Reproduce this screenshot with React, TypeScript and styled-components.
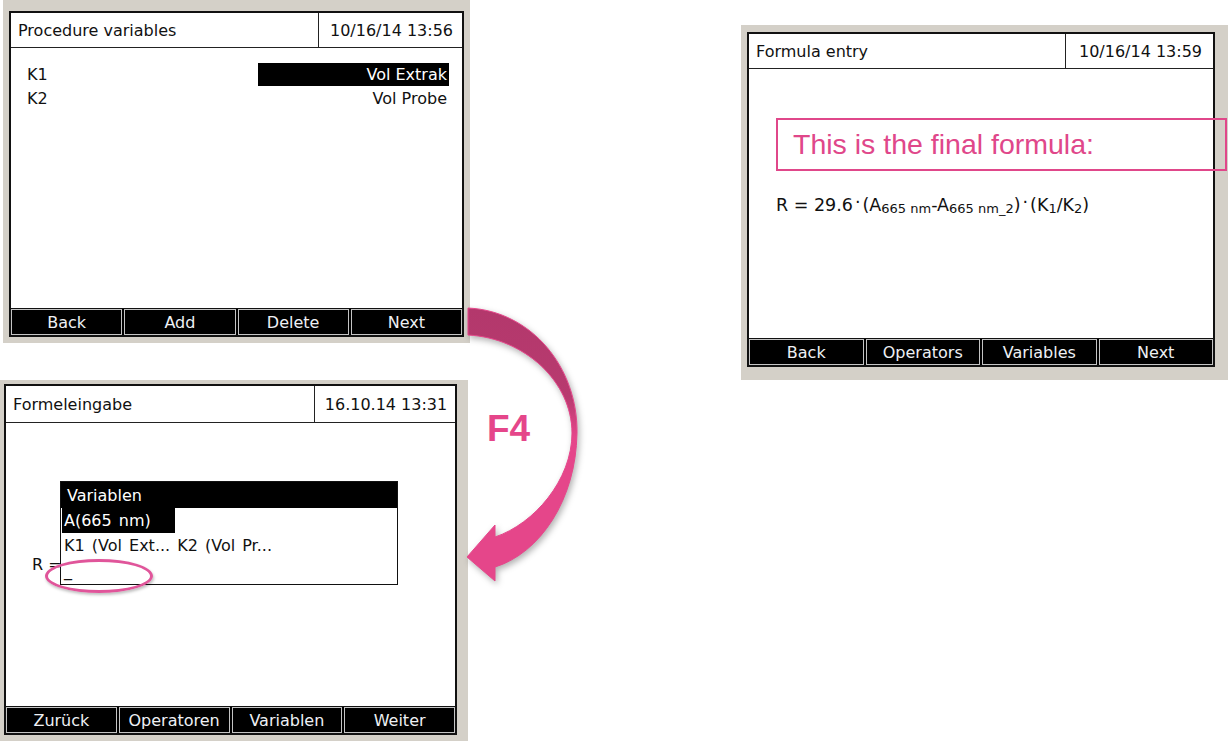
import styled, { createGlobalStyle } from "styled-components";

const GlobalStyle = createGlobalStyle`
  html, body {
    margin: 0;
    padding: 0;
    background: #ffffff;
  }
  body {
    font-family: "DejaVu Sans", Verdana, sans-serif;
  }
`;

const Canvas = styled.div`
  position: relative;
  width: 1228px;
  height: 741px;
  overflow: hidden;
  background: #ffffff;
`;

// each device screenshot sits at its own place on the slide
const Frame = styled.div<{ $x: number; $y: number; $w: number; $h: number; $pad: string }>`
  position: absolute;
  left: ${(p) => p.$x}px;
  top: ${(p) => p.$y}px;
  width: ${(p) => p.$w}px;
  height: ${(p) => p.$h}px;
  box-sizing: border-box;
  padding: ${(p) => p.$pad};
  background: #d4d0c8;
  display: flex;
`;

const Panel = styled.div`
  flex: 1;
  display: flex;
  flex-direction: column;
  border: 2px solid #111;
  background: #fff;
  color: #111;
  font-size: 16px;
`;

const Header = styled.div<{ $h: number }>`
  display: flex;
  height: ${(p) => p.$h}px;
  border-bottom: 1.5px solid #222;
  flex-shrink: 0;
`;

const Title = styled.div`
  flex: 1;
  display: flex;
  align-items: center;
  padding-left: 7px;
`;

const DateCell = styled.div<{ $w: number }>`
  width: ${(p) => p.$w}px;
  border-left: 1.5px solid #222;
  display: flex;
  align-items: center;
  justify-content: center;
  padding-left: 2px;
`;

const Body = styled.div<{ $pad: string }>`
  position: relative;
  flex: 1;
  padding: ${(p) => p.$pad};
  border-bottom: 1.5px solid #111;
`;

const Footer = styled.div`
  display: grid;
  grid-template-columns: repeat(4, 1fr);
  gap: 2px;
  height: 26px;
  background: #000;
`;

const SoftKey = styled.div`
  border: 1px solid #c4c4c4;
  background: #000;
  color: #eef0f4;
  display: flex;
  align-items: center;
  justify-content: center;
  font-size: 16px;
`;

const VarRow = styled.div`
  display: flex;
  justify-content: space-between;
  align-items: center;
  height: 24px;
`;

const Value = styled.span<{ $selected?: boolean }>`
  width: 191px;
  height: 23px;
  line-height: 23px;
  text-align: right;
  padding-right: 2px;
  box-sizing: border-box;
  background: ${(p) => (p.$selected ? "#000" : "transparent")};
  color: ${(p) => (p.$selected ? "#fff" : "#111")};
`;

const Popup = styled.div`
  position: absolute;
  left: 54px;
  top: 58px;
  width: 338px;
  height: 104px;
  box-sizing: border-box;
  border: 1.5px solid #111;
  background: #fff;
  display: flex;
  flex-direction: column;
`;

const PopupTitle = styled.div`
  height: 26px;
  background: #000;
  color: #fff;
  display: flex;
  align-items: center;
  padding-left: 6px;
`;

const PopupItem = styled.div<{ $selected?: boolean }>`
  align-self: flex-start;
  margin-left: 1px;
  height: 25px;
  line-height: 25px;
  padding: 0 ${(p) => (p.$selected ? "24px" : "2px")} 0 2px;
  background: ${(p) => (p.$selected ? "#000" : "transparent")};
  color: ${(p) => (p.$selected ? "#fff" : "#111")};
  word-spacing: 2px;
`;

const Equation = styled.div`
  position: absolute;
  left: 26px;
  top: 132px;
`;

const Formula = styled.div`
  font-size: 17.5px;
  white-space: nowrap;
  sub {
    font-size: 13px;
    vertical-align: -2px;
    line-height: 0;
  }
  .dot {
    display: inline-block;
    transform: translateY(-3px);
    margin: 0 2px;
  }
`;

const Callout = styled.div`
  position: absolute;
  left: 776px;
  top: 118px;
  width: 451px;
  height: 53px;
  box-sizing: border-box;
  border: 2px solid #e0478a;
  color: #e0478a;
  font-family: "Liberation Sans", Arial, sans-serif;
  font-size: 28.5px;
  padding-left: 15px;
  display: flex;
  align-items: center;
`;

const Ring = styled.div`
  position: absolute;
  left: 45px;
  top: 559px;
  width: 108px;
  height: 34px;
  box-sizing: border-box;
  border: 3px solid #e0559a;
  border-radius: 50%;
  box-shadow: 1px 2px 3px rgba(0, 0, 0, 0.25);
`;

const KeyLabel = styled.div`
  position: absolute;
  left: 487px;
  top: 408px;
  color: #e5468a;
  font-family: "Liberation Sans", Arial, sans-serif;
  font-weight: bold;
  font-size: 37px;
`;

const ArrowSvg = styled.svg`
  position: absolute;
  left: 440px;
  top: 290px;
  overflow: visible;
  filter: drop-shadow(2px 3px 3px rgba(0, 0, 0, 0.3));
`;

function SoftKeys({ labels }: { labels: string[] }) {
  return (
    <Footer>
      {labels.map((l) => (
        <SoftKey key={l}>{l}</SoftKey>
      ))}
    </Footer>
  );
}

function CurvedArrow() {
  return (
    <ArrowSvg width="160" height="310" viewBox="440 290 160 310">
      <defs>
        <linearGradient id="arrowFill" x1="0" y1="308" x2="0" y2="470" gradientUnits="userSpaceOnUse">
          <stop offset="0" stopColor="#b3386c" />
          <stop offset="0.55" stopColor="#b83a6f" />
          <stop offset="0.8" stopColor="#e5468a" />
          <stop offset="1" stopColor="#e5468a" />
        </linearGradient>
      </defs>
      <path
        d="M468 308 C532 311 578 368 577 433 C576 500 540 553 495 567 L495 581 L467 557 L495 525 L495 537 C534 524 572 480 572 433 C572 382 525 338 468 335 Z"
        fill="url(#arrowFill)"
        stroke="#e5468a"
        strokeWidth="1"
      />
    </ArrowSvg>
  );
}

export default function App() {
  return (
    <>
      <GlobalStyle />
      <Canvas>
        <Frame $x={3} $y={0} $w={467} $h={343} $pad="11px 6px 6px 6px">
          <Panel>
            <Header $h={34}>
              <Title>Procedure variables</Title>
              <DateCell $w={141}>10/16/14 13:56</DateCell>
            </Header>
            <Body $pad="14px 13px 0 16px">
              <VarRow>
                <span>K1</span>
                <Value $selected>Vol Extrak</Value>
              </VarRow>
              <VarRow>
                <span>K2</span>
                <Value>Vol Probe</Value>
              </VarRow>
            </Body>
            <SoftKeys labels={["Back", "Add", "Delete", "Next"]} />
          </Panel>
        </Frame>

        <Frame $x={0} $y={380} $w={468} $h={361} $pad="4px 11px 6px 4px">
          <Panel>
            <Header $h={36}>
              <Title>Formeleingabe</Title>
              <DateCell $w={138}>16.10.14 13:31</DateCell>
            </Header>
            <Body $pad="0">
              <Equation>R =</Equation>
              <Popup>
                <PopupTitle>Variablen</PopupTitle>
                <PopupItem $selected>A(665 nm)</PopupItem>
                <PopupItem>K1 (Vol Ext... K2 (Vol Pr...</PopupItem>
                <PopupItem>_</PopupItem>
              </Popup>
            </Body>
            <SoftKeys labels={["Zurück", "Operatoren", "Variablen", "Weiter"]} />
          </Panel>
        </Frame>

        <Frame $x={741} $y={25} $w={487} $h={355} $pad="7px 13px 13px 6px">
          <Panel>
            <Header $h={34}>
              <Title>Formula entry</Title>
              <DateCell $w={145}>10/16/14 13:59</DateCell>
            </Header>
            <Body $pad="126px 0 0 27px">
              <Formula>
                R = 29.6<span className="dot">·</span>(A<sub>665 nm</sub>-A<sub>665 nm_2</sub>)
                <span className="dot">·</span>(K<sub>1</sub>/K<sub>2</sub>)
              </Formula>
            </Body>
            <SoftKeys labels={["Back", "Operators", "Variables", "Next"]} />
          </Panel>
        </Frame>

        <Callout>This is the final formula:</Callout>
        <Ring />
        <CurvedArrow />
        <KeyLabel>F4</KeyLabel>
      </Canvas>
    </>
  );
}
